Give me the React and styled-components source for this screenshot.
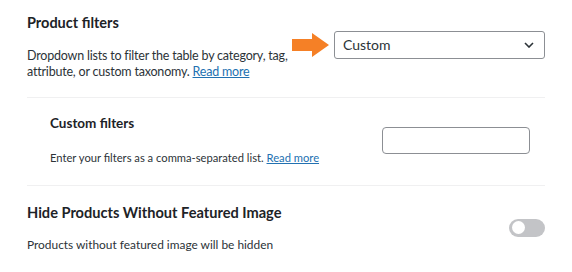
import React from 'react';
import styled, { createGlobalStyle } from 'styled-components';

const GlobalStyle = createGlobalStyle`
  body {
    margin: 0;
    background: #fff;
    font-family: Lato, "Noto Sans", sans-serif;
    color: #2c3338;
  }
`;

const App = () => {
  return (
    <Page>
      <GlobalStyle />
      <Row $pad="13px 0 17px">
        <Info>
          <Title $size="14.5px">Product filters</Title>
          <Desc $size="12.5px" $gap="15px" $track="-0.2px">
            Dropdown lists to filter the table by category, tag,
            <br />
            attribute, or custom taxonomy. <a href="#">Read more</a>
          </Desc>
        </Info>
        <Control $lift="4px">
          <Arrow width="37" height="24" viewBox="0 0 37 24">
            <path d="M0 6h20V0l17 12L20 24v-6H0z" fill="#f58026" />
          </Arrow>
          <Select>
            <span>Custom</span>
            <svg width="10" height="6" viewBox="0 0 10 6">
              <path d="M1 1l4 4 4-4" fill="none" stroke="#2c3338" strokeWidth="1.6" />
            </svg>
          </Select>
        </Control>
      </Row>
      <Row $pad="16px 0 19px 23px">
        <Info>
          <Title $size="13.5px">Custom filters</Title>
          <Desc $size="11.2px" $gap="17px">
            Enter your filters as a comma-separated list. <a href="#">Read more</a>
          </Desc>
        </Info>
        <Control>
          <TextInput />
        </Control>
      </Row>
      <Row $pad="17px 0 19px">
        <Info>
          <Title $size="14.6px">Hide Products Without Featured Image</Title>
          <Desc $size="11.9px" $gap="13px">
            Products without featured image will be hidden
          </Desc>
        </Info>
        <Control>
          <Toggle>
            <Knob />
          </Toggle>
        </Control>
      </Row>
    </Page>
  );
};

export default App;

const Page = styled.div`
  width: 518px;
  margin-left: 27px;
`;

const Row = styled.div`
  display: flex;
  align-items: center;
  justify-content: space-between;
  padding: ${(p) => p.$pad};
  border-bottom: 1px solid #f0f0f1;
`;

const Info = styled.div`
  flex: 1;
  min-width: 0;
  white-space: nowrap;
`;

const Title = styled.div`
  font-size: ${(p) => p.$size};
  font-weight: 700;
  color: #1d2327;
  line-height: 1.4;
`;

const Desc = styled.div`
  margin-top: ${(p) => p.$gap};
  font-size: ${(p) => p.$size};
  letter-spacing: ${(p) => p.$track || 'normal'};
  line-height: 16px;
  color: #2c3338;
  a {
    color: #2271b1;
  }
`;

const Control = styled.div`
  flex-shrink: 0;
  display: flex;
  align-items: center;
  gap: 5px;
  margin-bottom: ${(p) => p.$lift || '0'};
`;

const Arrow = styled.svg`
  display: block;
`;

const Select = styled.div`
  width: 211px;
  height: 28px;
  box-sizing: border-box;
  border: 1px solid #8c8f94;
  border-radius: 3px;
  display: flex;
  align-items: center;
  justify-content: space-between;
  padding: 0 10px 0 8px;
  font-size: 14px;
  color: #2c3338;
`;

const TextInput = styled.input`
  width: 148px;
  height: 27px;
  box-sizing: border-box;
  border: 1px solid #8c8f94;
  border-radius: 4px;
  margin-right: 15px;
`;

const Toggle = styled.div`
  width: 36px;
  height: 18px;
  border-radius: 9px;
  background: #c3c4c7;
  display: flex;
  align-items: center;
  padding: 0 3px;
  box-sizing: border-box;
`;

const Knob = styled.div`
  width: 13px;
  height: 13px;
  border-radius: 50%;
  background: #fff;
`;
